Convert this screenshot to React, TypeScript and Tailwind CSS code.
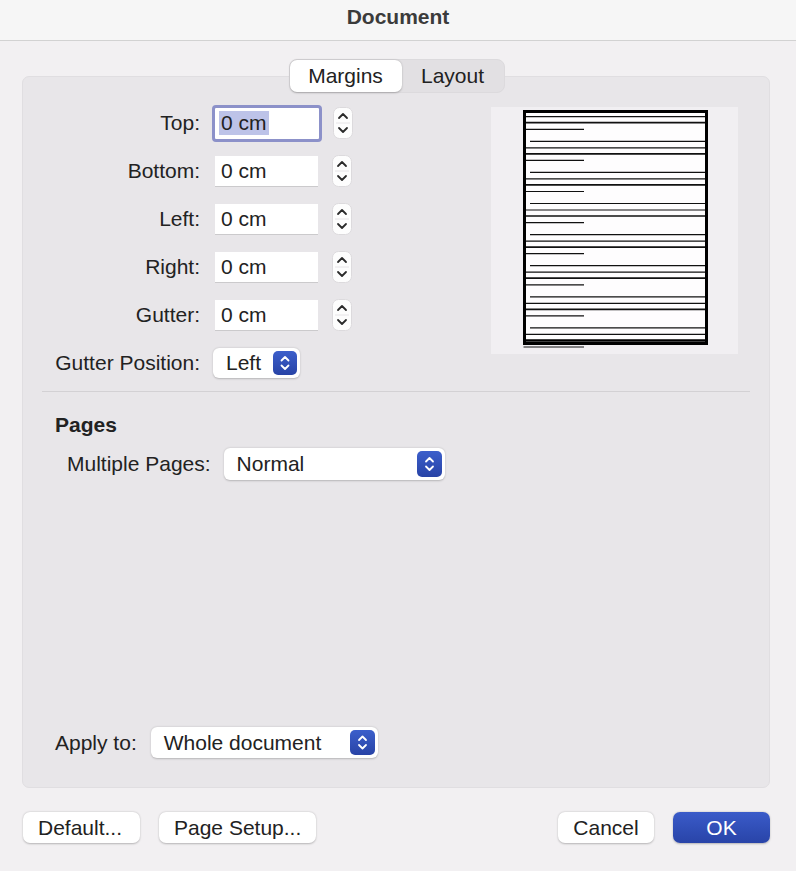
import React from 'react'

const rows = ['Top:', 'Bottom:', 'Left:', 'Right:', 'Gutter:']

function Stepper() {
  return (
    <svg width="20" height="32" viewBox="0 0 20 32" className="ml-[14px] shrink-0">
      <rect x="0.5" y="0.5" width="19" height="31" rx="6" fill="#fdfdfd" stroke="#dcdadd" />
      <line x1="3" y1="16" x2="17" y2="16" stroke="#e6e4e7" />
      <path d="M6 11 L10 7 L14 11" fill="none" stroke="#2a2a2a" strokeWidth="1.8" strokeLinecap="round" strokeLinejoin="round" />
      <path d="M6 21 L10 25 L14 21" fill="none" stroke="#2a2a2a" strokeWidth="1.8" strokeLinecap="round" strokeLinejoin="round" />
    </svg>
  )
}

function BlueArrows({ w = 24, h = 24 }: { w?: number; h?: number }) {
  const cx = w / 2
  const cy = h / 2
  return (
    <svg width={w} height={h} viewBox={`0 0 ${w} ${h}`} className="shrink-0">
      <defs>
        <linearGradient id="blueGrad" x1="0" y1="0" x2="0" y2="1">
          <stop offset="0" stopColor="#3c5fcb" />
          <stop offset="1" stopColor="#2843a6" />
        </linearGradient>
      </defs>
      <rect x="0" y="0" width={w} height={h} rx="5" fill="url(#blueGrad)" />
      <path d={`M${cx - 3.5} ${cy - 2.5} L${cx} ${cy - 6} L${cx + 3.5} ${cy - 2.5}`} fill="none" stroke="#fff" strokeWidth="1.8" strokeLinecap="round" strokeLinejoin="round" />
      <path d={`M${cx - 3.5} ${cy + 2.5} L${cx} ${cy + 6} L${cx + 3.5} ${cy + 2.5}`} fill="none" stroke="#fff" strokeWidth="1.8" strokeLinecap="round" strokeLinejoin="round" />
    </svg>
  )
}

function PagePreview() {
  const period = 31.1
  const across = Array.from({ length: 8 }, (_, k) => 9.7 + period * k)
  const thick = Array.from({ length: 7 }, (_, k) => 15.7 + period * k)
  const short = Array.from({ length: 8 }, (_, k) => 22.3 + period * k)
  const long = Array.from({ length: 7 }, (_, k) => 34.3 + period * k)
  return (
    <svg width="247" height="247" viewBox="0 0 247 247">
      <rect x="0" y="0" width="247" height="247" fill="#f1eff2" />
      <rect x="33.5" y="4.5" width="182" height="232" fill="#fefdfe" stroke="#000" strokeWidth="3" />
      {across.map((y) => (
        <line key={'a' + y} x1="35" x2="214" y1={y} y2={y} stroke="#111" strokeWidth="1.2" />
      ))}
      {thick.map((y) => (
        <line key={'t' + y} x1="35" x2="214" y1={y} y2={y} stroke="#111" strokeWidth="1.7" />
      ))}
      {short.map((y, i) => (
        <line key={'s' + y} x1={i === 7 ? 32.5 : 35} x2="93" y1={y} y2={y} stroke="#111" strokeWidth="1.2" />
      ))}
      {long.map((y) => (
        <line key={'l' + y} x1="39" x2="214" y1={y} y2={y} stroke="#111" strokeWidth="1.2" />
      ))}
      <line x1="35" x2="214" y1="233.5" y2="233.5" stroke="#000" strokeWidth="2.5" />
    </svg>
  )
}

function Popup({ label, width, height, arrowW, arrowH }: { label: string; width: string; height: string; arrowW: number; arrowH: number }) {
  return (
    <div className={`${width} ${height} flex items-center justify-between bg-white rounded-[6px] pl-[13px] pr-[3px] shadow-[0_0.5px_2px_rgba(0,0,0,0.22)]`}>
      <span>{label}</span>
      <BlueArrows w={arrowW} h={arrowH} />
    </div>
  )
}

export default function App() {
  return (
    <div className="w-[796px] h-[871px] flex flex-col bg-[#f2f0f2] font-['Liberation_Sans',Arial,sans-serif] text-[21px] leading-[24px] text-[#222]">
      {/* Title bar */}
      <div className="h-[41px] shrink-0 flex justify-center pt-[5px] bg-[#f6f6f6] border-b border-[#d2d2d2] font-bold text-[#3b3b3b]">
        Document
      </div>

      <div className="flex-1 flex flex-col pl-[22px] pr-[26px] pt-[18px]">
        {/* Tabs */}
        <div className="relative z-10 flex justify-center mb-[-17px]">
          <div className="flex h-[34px] rounded-[8px] bg-[#e2e0e3] border border-[#dcdadd] ml-[1px]">
            <div className="w-[112px] flex items-center justify-center bg-white rounded-[7px] shadow-[0_0.5px_2px_rgba(0,0,0,0.25)]">
              Margins
            </div>
            <div className="w-[102px] flex items-center justify-center">Layout</div>
          </div>
        </div>

        {/* Panel */}
        <div className="h-[712px] flex flex-col bg-[#e8e6e9] border border-[#e0dee1] rounded-[7px] pt-[22px] pb-[29px]">
          <div className="flex">
            <div className="flex flex-col">
              {rows.map((r, i) => (
                <div key={r} className="h-[48px] flex items-center">
                  <div className="w-[177px] text-right">{r}</div>
                  {i === 0 ? (
                    <div className="ml-[15px] w-[104px] h-[31px] flex items-center bg-white pl-[4px] outline outline-[3px] outline-[#8c91c9] rounded-[1px] outline-offset-0">
                      <span className="bg-[#bdc3e8] px-[2px] leading-[24px]">0 cm</span>
                    </div>
                  ) : (
                    <div className="ml-[15px] w-[103px] h-[30px] flex items-center bg-white pl-[6px] shadow-[0_1px_0.5px_rgba(0,0,0,0.12)]">
                      0 cm
                    </div>
                  )}
                  <Stepper />
                </div>
              ))}
              <div className="h-[48px] flex items-center">
                <div className="w-[177px] text-right">Gutter Position:</div>
                <div className="ml-[13px]">
                  <Popup label="Left" width="w-[87px]" height="h-[30px]" arrowW={24} arrowH={24} />
                </div>
              </div>
            </div>
            <div className="ml-auto mr-[31px] mt-[8px]">
              <PagePreview />
            </div>
          </div>

          <div className="mx-[19px] mt-[4px] h-px bg-[#d3d1d4]" />

          <div className="pl-[32px] mt-[20px] font-bold leading-[26px]">Pages</div>
          <div className="flex items-center pl-[44px] mt-[10px]">
            <span>Multiple Pages:</span>
            <div className="ml-[13px]">
              <Popup label="Normal" width="w-[221px]" height="h-[32px]" arrowW={25} arrowH={26} />
            </div>
          </div>

          <div className="flex-1" />

          <div className="flex items-center pl-[32px]">
            <span>Apply to:</span>
            <div className="ml-[14px]">
              <Popup label="Whole document" width="w-[227px]" height="h-[31px]" arrowW={25} arrowH={25} />
            </div>
          </div>
        </div>

        {/* Footer buttons */}
        <div className="flex items-center mt-[24px] pl-[1px]">
          <button className="w-[117px] h-[31px] bg-white rounded-[7px] shadow-[0_0.5px_2px_rgba(0,0,0,0.25)] text-left pl-[15px]">
            Default...
          </button>
          <button className="ml-[19px] w-[157px] h-[31px] bg-white rounded-[7px] shadow-[0_0.5px_2px_rgba(0,0,0,0.25)] text-left pl-[15px]">
            Page Setup...
          </button>
          <button className="ml-auto w-[96px] h-[31px] bg-white rounded-[7px] shadow-[0_0.5px_2px_rgba(0,0,0,0.25)]">
            Cancel
          </button>
          <button className="ml-[19px] w-[97px] h-[31px] rounded-[7px] text-white bg-gradient-to-b from-[#3a5bc9] to-[#2944a8] shadow-[0_0.5px_2px_rgba(0,0,0,0.25)]">
            OK
          </button>
        </div>
      </div>
    </div>
  )
}
